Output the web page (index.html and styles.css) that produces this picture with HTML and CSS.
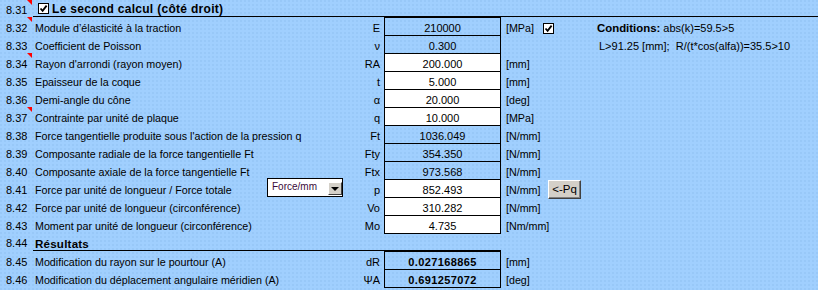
FILE: index.html
```html
<!DOCTYPE html>
<html lang="fr">
<head>
<meta charset="utf-8">
<title>Le second calcul</title>
<link rel="stylesheet" href="styles.css">
</head>
<body>
<div class="sheet">
  <div class="row head">
    <div class="num note">8.31</div>
    <div class="title">
      <span class="cb"><svg viewBox="0 0 9 9" width="9" height="9"><path d="M1.5 4.5 L3.6 6.8 L7.6 1.6" fill="none" stroke="#000" stroke-width="1.8"/></svg></span>
      <span class="title-text">Le second calcul (côté droit)</span>
    </div>
  </div>

  <div class="row">
    <div class="num note">8.32</div>
    <div class="lbl">Module d’élasticité à la traction</div>
    <div class="sym">E</div>
    <div class="val">210000</div>
    <div class="unit">[MPa]</div>
    <div class="extra chk"><span class="cb"><svg viewBox="0 0 9 9" width="9" height="9"><path d="M1.5 4.5 L3.6 6.8 L7.6 1.6" fill="none" stroke="#000" stroke-width="1.8"/></svg></span></div>
    <div class="cond"><b>Conditions:</b> abs(k)=59.5&gt;5</div>
  </div>

  <div class="row">
    <div class="num">8.33</div>
    <div class="lbl">Coefficient de Poisson</div>
    <div class="sym">ν</div>
    <div class="val">0.300</div>
    <div class="unit"></div>
    <div class="extra"></div>
    <div class="cond cond2">L&gt;91.25 [mm];&nbsp; R/(t*cos(alfa))=35.5&gt;10</div>
  </div>

  <div class="row">
    <div class="num note">8.34</div>
    <div class="lbl">Rayon d'arrondi (rayon moyen)</div>
    <div class="sym">RA</div>
    <div class="val in">200.000</div>
    <div class="unit">[mm]</div>
  </div>

  <div class="row">
    <div class="num">8.35</div>
    <div class="lbl">Epaisseur de la coque</div>
    <div class="sym">t</div>
    <div class="val in">5.000</div>
    <div class="unit">[mm]</div>
  </div>

  <div class="row">
    <div class="num">8.36</div>
    <div class="lbl">Demi-angle du cône</div>
    <div class="sym">α</div>
    <div class="val in">20.000</div>
    <div class="unit">[deg]</div>
  </div>

  <div class="row">
    <div class="num note">8.37</div>
    <div class="lbl">Contrainte par unité de plaque</div>
    <div class="sym">q</div>
    <div class="val in">10.000</div>
    <div class="unit">[MPa]</div>
  </div>

  <div class="row">
    <div class="num">8.38</div>
    <div class="lbl">Force tangentielle produite sous l'action de la pression q</div>
    <div class="sym">Ft</div>
    <div class="val">1036.049</div>
    <div class="unit">[N/mm]</div>
  </div>

  <div class="row">
    <div class="num">8.39</div>
    <div class="lbl">Composante radiale de la force tangentielle Ft</div>
    <div class="sym">Fty</div>
    <div class="val">354.350</div>
    <div class="unit">[N/mm]</div>
  </div>

  <div class="row">
    <div class="num">8.40</div>
    <div class="lbl">Composante axiale de la force tangentielle Ft</div>
    <div class="sym">Ftx</div>
    <div class="val">973.568</div>
    <div class="unit">[N/mm]</div>
  </div>

  <div class="row">
    <div class="num">8.41</div>
    <div class="lbl combo-cell">
      <span>Force par unité de longueur / Force totale</span>
      <div class="combo">
        <span class="combo-text">Force/mm</span>
        <span class="combo-btn"><span class="arrow"></span></span>
      </div>
    </div>
    <div class="sym">p</div>
    <div class="val in">852.493</div>
    <div class="unit">[N/mm]</div>
    <div class="extra btn-cell"><span class="btn">&lt;-Pq</span></div>
  </div>

  <div class="row">
    <div class="num">8.42</div>
    <div class="lbl">Force par unité de longueur (circonférence)</div>
    <div class="sym">Vo</div>
    <div class="val in">310.282</div>
    <div class="unit">[N/mm]</div>
  </div>

  <div class="row">
    <div class="num">8.43</div>
    <div class="lbl">Moment par unité de longueur (circonférence)</div>
    <div class="sym">Mo</div>
    <div class="val in">4.735</div>
    <div class="unit">[Nm/mm]</div>
  </div>

  <div class="row sub">
    <div class="num">8.44</div>
    <div class="lbl under"><b>Résultats</b></div>
    <div class="sym under"></div>
    <div class="val cap"></div>
  </div>

  <div class="row">
    <div class="num">8.45</div>
    <div class="lbl">Modification du rayon sur le pourtour (A)</div>
    <div class="sym">dR</div>
    <div class="val res">0.027168865</div>
    <div class="unit">[mm]</div>
  </div>

  <div class="row">
    <div class="num">8.46</div>
    <div class="lbl">Modification du déplacement angulaire méridien (A)</div>
    <div class="sym">ΨA</div>
    <div class="val res last">0.691257072</div>
    <div class="unit">[deg]</div>
  </div>
</div>
</body>
</html>
```

FILE: styles.css
```css
html, body {
  margin: 0;
  padding: 0;
}
body {
  background-color: #a0cffe;
  background-image: radial-gradient(circle at 1px 1px, #94c4f4 0.6px, transparent 0.9px);
  background-size: 4px 4px;
  font-family: "Liberation Sans", Arial, sans-serif;
  font-size: 10.7px;
  color: #000;
  width: 818px;
  height: 290px;
  overflow: hidden;
}
.sheet {
  width: 818px;
}
.row {
  display: grid;
  grid-template-columns: 33px 317px 34px 117px 42px 54px 221px;
  height: 18px;
}
.row > div {
  box-sizing: border-box;
  height: 18px;
  padding-top: 5px;
  line-height: 13px;
  white-space: nowrap;
}
.row.head {
  height: 17px;
}
.row.head > div {
  height: 17px;
  padding-top: 4px;
}
.num {
  padding-left: 6px;
  position: relative;
  font-size: 11px;
}
.num.note::after {
  content: "";
  position: absolute;
  top: 0;
  right: 1px;
  width: 0;
  height: 0;
  border-top: 5px solid #ff0000;
  border-left: 5px solid transparent;
}
.title {
  grid-column: 2 / -1;
  border-bottom: 1px solid #000;
  display: flex;
  align-items: flex-start;
}
.row.head > .title {
  padding-top: 3px;
}
.title .cb {
  margin-left: 5px;
  margin-right: 3px;
}
.title-text {
  font-weight: bold;
  font-size: 12px;
  letter-spacing: 0.3px;
  line-height: 13px;
}
.cb {
  display: inline-flex;
  align-items: center;
  justify-content: center;
  width: 11px;
  height: 11px;
  box-sizing: border-box;
  border: 1px solid #000;
  background: #fff;
}
.cb svg {
  display: block;
}
.lbl {
  padding-left: 2px;
}
.sym {
  text-align: right;
  padding-right: 4px;
  font-size: 11px;
}
.val {
  text-align: center;
  font-size: 11px;
  border-left: 1px solid #000;
  border-right: 1px solid #000;
  border-top: 1px solid #000;
}
.row > .val {
  padding-top: 4px;
}
.val.in {
  background: #fff;
}
.val.res {
  font-weight: bold;
  letter-spacing: 0.4px;
}
.row > .val.last {
  height: 19px;
  border-bottom: 1px solid #000;
}
.row > .val.cap {
  border-left: 0;
  border-right: 0;
  border-bottom: 1px solid #000;
}
.under {
  border-bottom: 1px solid #000;
}
.row.sub > div {
  padding-top: 4px;
}
.row.sub .lbl b {
  font-size: 11.6px;
  letter-spacing: 0.2px;
}
.unit {
  padding-left: 5px;
}
.row > .chk {
  padding-top: 6px;
}
.cond {
  padding-left: 0;
  font-size: 11px;
}
.cond b {
  font-size: 11.4px;
}
.cond2 {
  padding-left: 2px;
}
.combo-cell {
  display: flex;
  align-items: flex-start;
}
.combo {
  margin-left: auto;
  margin-right: 7px;
  margin-top: -6px;
  width: 76px;
  height: 19px;
  box-sizing: border-box;
  border: 1px solid #000;
  background: #fff;
  display: flex;
  align-items: flex-start;
}
.combo-text {
  flex: 1;
  font-size: 10px;
  line-height: 14px;
  padding-left: 4px;
  padding-top: 1px;
  color: #3a0a3a;
}
.combo-btn {
  width: 14px;
  height: 13px;
  margin-top: 3px;
  box-sizing: border-box;
  background: #d4d0c8;
  border: 1px solid;
  border-color: #ffffff #404040 #404040 #ffffff;
  display: flex;
  align-items: center;
  justify-content: center;
}
.arrow {
  width: 0;
  height: 0;
  border-left: 4px solid transparent;
  border-right: 4px solid transparent;
  border-top: 4px solid #000;
}
.row > .btn-cell {
  padding-top: 1px;
  padding-left: 5px;
}
.btn {
  display: flex;
  align-items: center;
  justify-content: center;
  width: 33px;
  height: 19px;
  box-sizing: border-box;
  background: #d4d0c8;
  border: 1px solid;
  border-color: #ffffff #404040 #404040 #ffffff;
  box-shadow: inset -1px -1px 0 #808080;
  font-size: 11.5px;
  line-height: 15px;
  color: #000;
}
```
